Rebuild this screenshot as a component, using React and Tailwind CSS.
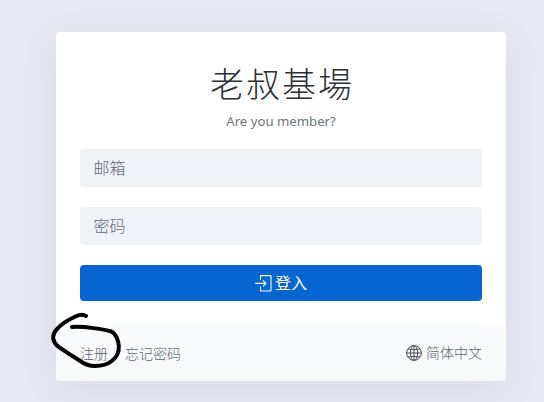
import React from 'react';

const inputClass =
  'block w-full h-[38px] rounded bg-[#eff3f8] px-[13.5px] text-base text-[#212529] placeholder:text-[#5f6871] outline-none';

const LoginIcon = () => (
  <svg className="size-[17px]" viewBox="0 0 17 17" fill="none" stroke="currentColor" strokeWidth="1.1">
    <path d="M5.5 5V1.2Q5.5 0.6 6.1 0.6H15.4Q16 0.6 16 1.2V15.4Q16 16 15.4 16H6.1Q5.5 16 5.5 15.4V11.5" />
    <path d="M0.2 8.4H10.6M8 5.4L11 8.4L8 11.4" strokeLinejoin="round" />
  </svg>
);

const GlobeIcon = () => (
  <svg className="size-4 text-[#495057]" viewBox="0 0 16 16" fill="none" stroke="currentColor">
    <circle cx="8" cy="8" r="7.4" />
    <ellipse cx="8" cy="8" rx="3.6" ry="7.4" />
    <path d="M8 0.6V15.4M0.6 8H15.4M2 4Q8 5.4 14 4M2 12Q8 10.6 14 12" />
  </svg>
);

const LoginCard = () => (
  <div className="w-[450px] h-[349px] flex flex-col rounded bg-white overflow-hidden shadow-[0_8px_40px_rgba(50,50,75,0.07)]">
    <div className="h-[293px] px-6 pt-[31px]">
      <h1 className="h-[43px] pl-0.5 text-center text-[34px] leading-[43px] tracking-[2px] font-light text-[#2b3036]">老叔基場</h1>
      <p className="mt-[5px] h-5 text-center text-[13.2px] leading-5 font-normal text-[#6c757d]">Are you member?</p>

      <form className="mt-[18px] flex flex-col gap-5" onSubmit={(e) => e.preventDefault()}>
        <input className={inputClass} type="email" placeholder="邮箱" />
        <input className={inputClass} type="password" placeholder="密码" />
        <button
          type="submit"
          className="flex h-9 items-center justify-center gap-[3px] rounded bg-[#0665d0] text-base font-normal text-white"
        >
          <LoginIcon />
          登入
        </button>
      </form>
    </div>

    {/* Footer links */}
    <div className="flex h-14 items-center justify-between bg-[#f8f9fb] px-6 text-sm text-[#5c6670]">
      <div className="flex gap-[17px] pt-0.5">
        <a href="#signup">注册</a>
        <a href="#reminder">忘记密码</a>
      </div>
      <a href="#lang" className="flex items-center gap-1">
        <GlobeIcon />
        简体中文
      </a>
    </div>
  </div>
);

// Hand-drawn marker around the sign up link
const Marker = () => (
  <svg className="pointer-events-none absolute left-[48px] top-[308px]" width="80" height="66" viewBox="48 308 80 66" fill="none">
    <path
      d="M86 316C83 314 79 314.8 76 316.2C70 319 62 323.5 58 328C54 332 52.5 335 53.3 339C54 342 55.5 344.5 58 346.3C66 352 73 356.5 80 360.8C84 363.8 88 366 95 366C102 366 107.5 364.5 111.5 361.3C117 357 119.3 352 118.8 346C118.5 340 115.5 333.5 111.3 331.5C105 329.5 83 326 72 327"
      stroke="#000"
      strokeWidth="4"
      strokeLinecap="round"
      strokeLinejoin="round"
    />
  </svg>
);

export default function App() {
  return (
    <div className="relative h-[402px] w-[544px] overflow-hidden bg-[#e6e9f2] pl-14 pt-8 font-['Noto_Sans','Noto_Sans_CJK_SC',sans-serif] font-light">
      <LoginCard />
      <Marker />
    </div>
  );
}
